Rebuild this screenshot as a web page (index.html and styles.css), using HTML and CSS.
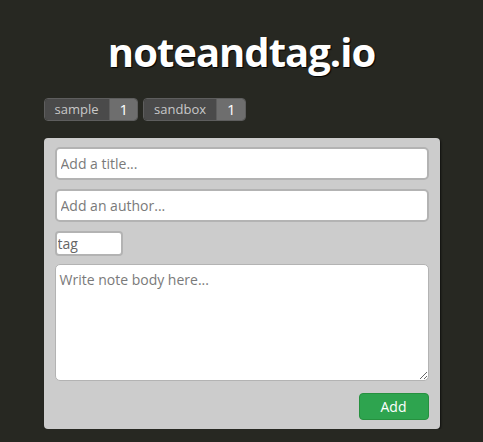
FILE: index.html
```html
<!DOCTYPE html>
<html>
<head>
<meta charset="utf-8">
<link rel="stylesheet" href="styles.css">
</head>
<body>
<div class="page">
  <h1 class="title">noteandtag.io</h1>
  <div class="tags">
    <span class="pill"><span class="pill-label">sample</span><span class="pill-count">1</span></span>
    <span class="pill"><span class="pill-label">sandbox</span><span class="pill-count">1</span></span>
  </div>
  <form class="card">
    <input class="field" type="text" placeholder="Add a title...">
    <input class="field" type="text" placeholder="Add an author...">
    <input class="tag-field" type="text" value="tag">
    <textarea class="body-field" placeholder="Write note body here..."></textarea>
    <div class="actions"><button class="add-btn" type="button">Add</button></div>
  </form>
</div>
</body>
</html>
```

FILE: styles.css
```css
html, body {
  margin: 0;
  padding: 0;
  background: #272822;
  font-family: "Open Sans", "Noto Sans", sans-serif;
}
.page {
  width: 396px;
  margin: 0 auto;
  padding-top: 24px;
}
.title {
  margin: 0;
  text-align: center;
  color: #ffffff;
  font-size: 40px;
  font-weight: 700;
  line-height: 56px;
  letter-spacing: -1px;
  text-shadow: 1px 1px 1px #000;
}
.tags {
  display: flex;
  gap: 5px;
  margin-top: 18px;
}
.pill {
  display: flex;
  height: 23px;
  box-sizing: border-box;
  border: 1px solid #5e5e5e;
  border-radius: 4px;
  overflow: hidden;
  font-size: 13px;
  line-height: 21px;
}
.pill-label {
  background: #4a4a4a;
  color: #c8c8c8;
  padding: 0 10px;
}
.pill-count {
  background: #6e6e6e;
  color: #ffffff;
  padding: 0 9px 0 10px;
  font-size: 15px;
  border-left: 1px solid #5e5e5e;
}
.card {
  margin-top: 17px;
  background: #cccccc;
  border-radius: 4px;
  box-shadow: 1px 1px 2px rgba(0,0,0,0.6);
  padding: 9px 11px 9px 11px;
  display: flex;
  flex-direction: column;
  gap: 9px;
}
.field {
  height: 33px;
  box-sizing: border-box;
  border: 2px solid #b3b3b3;
  border-radius: 5px;
  background: #fff;
  padding: 0 4px;
  font-family: inherit;
  font-size: 14px;
  color: #555;
}
.field::placeholder, .body-field::placeholder {
  color: #7a7a7a;
}
.tag-field {
  width: 68px;
  height: 25px;
  box-sizing: border-box;
  border: 2px solid #b3b3b3;
  border-radius: 4px;
  background: #fff;
  padding: 0 1px;
  font-family: inherit;
  font-size: 14px;
  color: #666;
  margin-bottom: -1px;
}
.body-field {
  height: 117px;
  box-sizing: border-box;
  border: 1px solid #b3b3b3;
  border-radius: 5px;
  background: #fff;
  padding: 5px 4px;
  font-family: inherit;
  font-size: 14px;
  color: #555;
  resize: vertical;
}
.actions {
  display: flex;
  justify-content: flex-end;
  padding-top: 3px;
}
.add-btn {
  width: 70px;
  height: 27px;
  background: #2ea44f;
  border: 1px solid #26913f;
  border-radius: 4px;
  color: #fff;
  font-family: inherit;
  font-size: 14px;
  padding: 0;
}
```
